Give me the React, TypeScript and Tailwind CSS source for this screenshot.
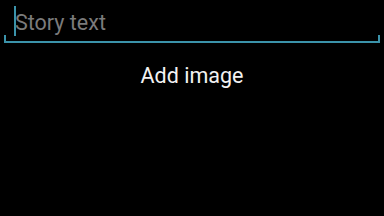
export default function App() {
  return (
    <div className="w-[384px] h-[216px] bg-black overflow-hidden" style={{ fontFamily: 'Roboto, "Noto Sans", sans-serif' }}>
      {/* Story text field */}
      <div className="relative mx-[4px] h-[43px] border-b-2 border-[#3b93aa]">
        <div className="absolute left-0 bottom-0 w-[2px] h-[6px] bg-[#3b93aa]" />
        <div className="absolute right-0 bottom-0 w-[2px] h-[6px] bg-[#3b93aa]" />
        <div className="flex items-start pt-[6px] pl-[10px]">
          <div className="w-[2px] h-[30px] bg-[#3b93aa]" />
          <span className="text-[21.5px] leading-[30px] text-[#7b7b7b] -ml-[1px] mt-[2px]">Story text</span>
        </div>
      </div>
      {/* Add image button */}
      <div className="flex justify-center pt-[18px]">
        <span className="text-[21.5px] leading-[30px] text-[#f2f2f2]">Add image</span>
      </div>
    </div>
  );
}
